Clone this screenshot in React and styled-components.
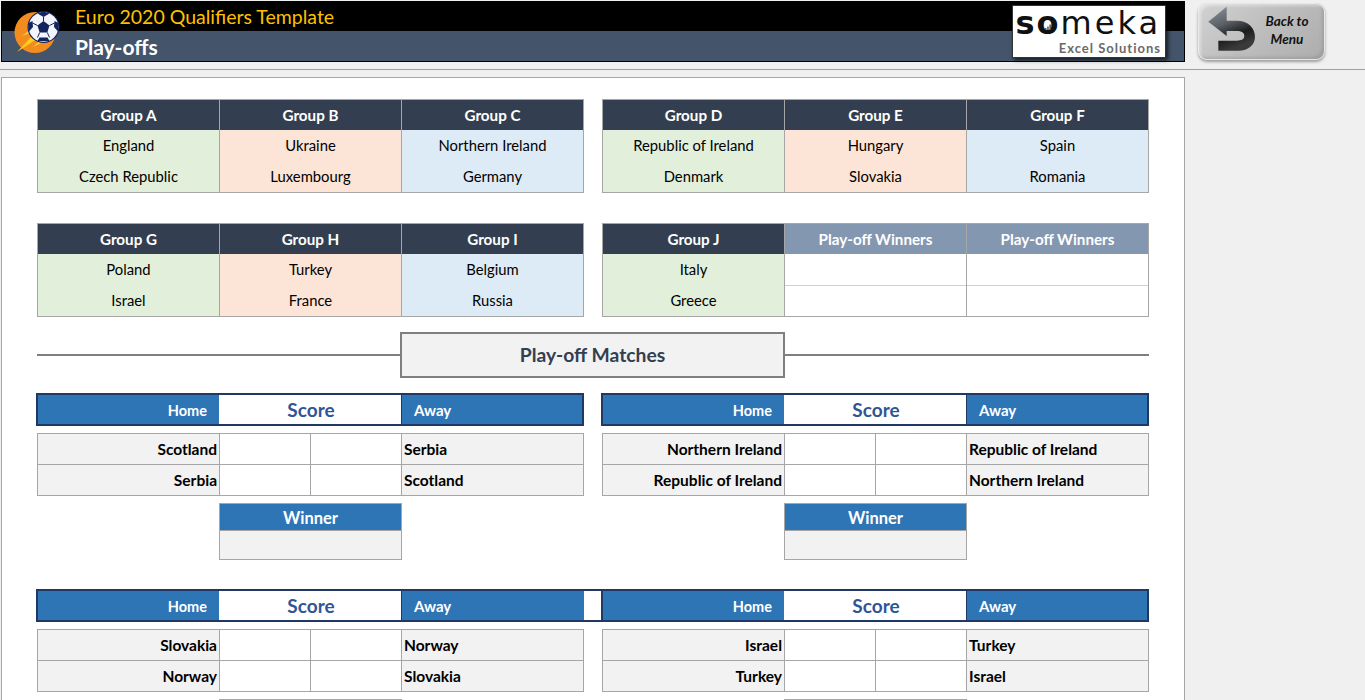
import React from 'react';
import styled, { createGlobalStyle } from 'styled-components';

const GlobalStyle = createGlobalStyle`
  * { box-sizing: border-box; }
  html, body { margin: 0; padding: 0; height: 100%; overflow: hidden; }
  body { background: #f0f0f0; font-family: Lato, "Open Sans", sans-serif; color: #000; }
`;

const Page = styled.div`
  width: 1365px;
  height: 700px;
  overflow: hidden;
  display: flex;
  flex-direction: column;
`;

const TopBar = styled.div`
  height: 70px;
  flex: none;
  display: flex;
  align-items: flex-start;
  padding: 1px 0 0 1px;
  border-bottom: 1px solid #a0a0a0;
`;

const Banner = styled.div`
  position: relative;
  width: 1184px;
  height: 61px;
  border: 1px solid #000;
  display: grid;
  grid-template-rows: 29px 30px;
  grid-template-columns: 1fr;
`;

const TitleStrip = styled.div`
  background: #000;
  color: #ffc000;
  font-size: 19.5px;
  line-height: 29px;
  padding-left: 73px;
`;

const SubtitleStrip = styled.div`
  background: #44546a;
  color: #fff;
  font-size: 21px;
  font-weight: 700;
  line-height: 32px;
  padding-left: 73px;
`;

const BallLogo = styled.svg`
  position: absolute;
  left: 12px;
  top: 8px;
`;

const SomekaLogo = styled.div`
  position: absolute;
  left: 1010px;
  top: 3px;
  width: 154px;
  height: 53px;
  background: #fff;
  border: 1px solid #333;
  box-shadow: 2px 2px 4px rgba(0, 0, 0, 0.7);
  display: flex;
  flex-direction: column;
  align-items: flex-end;
  padding-right: 4px;
  color: #111;
`;

const SomekaWord = styled.div`
  font-family: "DejaVu Sans", sans-serif;
  font-size: 32px;
  line-height: 32px;
  height: 32px;
  margin-top: 1px;
  letter-spacing: 3px;
`;

const Heavy = styled.span`
  font-weight: 700;
  letter-spacing: 2px;
`;

const SomekaMark = styled.svg`
  position: absolute;
  left: 31px;
  top: 17px;
`;

const SomekaTag = styled.div`
  margin-top: 2px;
  font-size: 13px;
  font-weight: 700;
  letter-spacing: 1px;
  line-height: 15px;
  color: #6a6a6a;
`;

const BackButton = styled.div`
  width: 127px;
  height: 57px;
  margin: 2px 0 0 13px;
  border-radius: 9px;
  display: flex;
  align-items: center;
  background: linear-gradient(135deg, #d2d2d2 0%, #bdbdbd 50%, #adadad 100%);
  box-shadow: inset 0 0 0 1px #e8e8e8, inset 3px 3px 3px rgba(255, 255, 255, 0.4), inset -3px -3px 3px rgba(120, 120, 120, 0.3), 0 2px 3px rgba(0, 0, 0, 0.35);
`;

const BackLabel = styled.div`
  flex: 1;
  padding: 0 9px 4px 0;
  text-align: center;
  font-size: 13.5px;
  line-height: 18px;
  font-weight: 700;
  font-style: italic;
  color: #111;
`;

const Sheet = styled.div`
  width: 1184px;
  margin: 7px 0 0 1px;
  flex: 1;
  min-height: 0;
  overflow: hidden;
  background: #fff;
  border: 1px solid #a6a6a6;
  border-bottom: 0;
  padding: 21px 0 0 35px;
`;

const Content = styled.div`
  width: 1112px;
  display: flex;
  flex-direction: column;
`;

const TwoColumns = styled.div`
  display: grid;
  grid-template-columns: 547px 547px;
  column-gap: 18px;
  row-gap: ${props => props.$rowGap || 0}px;
`;

const GroupTable = styled.div`
  display: grid;
  grid-template-columns: 182px 182px 182px;
  height: 94px;
  border-top: 1px solid #a6a6a6;
  border-bottom: 1px solid #a6a6a6;
  border-right: 1px solid #a6a6a6;
`;

const GroupColumn = styled.div`
  display: grid;
  grid-template-rows: 30px 31px 31px;
  border-left: 1px solid #a6a6a6;
  background: ${props => props.$tint || '#fff'};
`;

const GroupHead = styled.div`
  background: ${props => (props.$muted ? '#8497b0' : '#333f50')};
  color: #fff;
  font-size: 15.2px;
  font-weight: 700;
  padding-bottom: 1px;
  display: flex;
  align-items: center;
  justify-content: center;
`;

const GroupCell = styled.div`
  font-size: 14.8px;
  padding-bottom: 1px;
  display: flex;
  align-items: center;
  justify-content: center;
  border-top: ${props => (props.$ruled ? '1px solid #d0d0d0' : '0')};
`;

const SectionRow = styled.div`
  display: grid;
  grid-template-columns: 363px 385px 1fr;
  align-items: center;
  margin: 15px 0;
`;

const SectionLine = styled.div`
  height: 2px;
  background: #7f7f7f;
`;

const SectionTitle = styled.div`
  height: 46px;
  background: #f2f2f2;
  border: 2px solid #7f7f7f;
  color: #333f50;
  font-size: 19.3px;
  font-weight: 700;
  padding-bottom: 1px;
  display: flex;
  align-items: center;
  justify-content: center;
`;

const MatchBlock = styled.div`
  display: flex;
  flex-direction: column;
`;

const MatchHeader = styled.div`
  height: 33px;
  margin: 0 ${props => (props.$joined ? '-17px' : '0')} 0 -1px;
  display: grid;
  grid-template-columns: ${props => (props.$joined ? '181px 183px 182px 1fr' : '181px 183px 1fr')};
  background: #2e75b6;
  border: 2px solid #1f3864;
  border-right: ${props => (props.$joined ? '0' : '2px solid #1f3864')};
  color: #fff;
  font-weight: 700;
`;

const HomeLabel = styled.div`
  display: flex;
  align-items: center;
  justify-content: flex-end;
  padding: 1px 12px 0 0;
  font-size: 14.5px;
`;

const ScoreLabel = styled.div`
  display: flex;
  align-items: center;
  justify-content: center;
  padding-left: 2px;
  background: #fff;
  color: #2f5597;
  font-size: 19px;
  font-weight: 700;
  border-right: 1px solid #1f3864;
`;

const AwayLabel = styled.div`
  display: flex;
  align-items: center;
  padding: 1px 0 0 12px;
  font-size: 15px;
`;

const HeaderGap = styled.div`
  background: #fff;
`;

const ScoreTable = styled.div`
  margin-top: 7px;
  display: grid;
  grid-template-columns: 182px 91px 91px 182px;
  grid-template-rows: 30px 31px;
  height: 63px;
  border-top: 1px solid #a6a6a6;
  border-right: 1px solid #a6a6a6;
  border-bottom: 1px solid #a6a6a6;
`;

const TeamCell = styled.div`
  background: #f2f2f2;
  font-size: 15.5px;
  font-weight: 700;
  display: flex;
  align-items: center;
  justify-content: ${props => (props.$home ? 'flex-end' : 'flex-start')};
  padding: 0 2px;
  border-left: 1px solid #a6a6a6;
  border-top: ${props => (props.$second ? '1px solid #a6a6a6' : '0')};
`;

const GoalCell = styled.div`
  background: #fff;
  border-left: 1px solid #a6a6a6;
  border-top: ${props => (props.$second ? '1px solid #a6a6a6' : '0')};
`;

const WinnerBox = styled.div`
  width: 183px;
  height: 57px;
  margin: 7px 0 29px 182px;
  border: 1px solid #a6a6a6;
  display: grid;
  grid-template-rows: 27px 1fr;
`;

const WinnerHead = styled.div`
  background: #2e75b6;
  color: #fff;
  font-size: 16.5px;
  font-weight: 700;
  padding-top: 1px;
  display: flex;
  align-items: center;
  justify-content: center;
  border-bottom: 1px solid #a6a6a6;
`;

const WinnerValue = styled.div`
  background: #f2f2f2;
`;

const GREEN = '#e2efda';
const ORANGE = '#fce4d6';
const BLUE = '#ddebf7';

const topGroups = [
  [
    { title: 'Group A', tint: GREEN, teams: ['England', 'Czech Republic'] },
    { title: 'Group B', tint: ORANGE, teams: ['Ukraine', 'Luxembourg'] },
    { title: 'Group C', tint: BLUE, teams: ['Northern Ireland', 'Germany'] },
  ],
  [
    { title: 'Group D', tint: GREEN, teams: ['Republic of Ireland', 'Denmark'] },
    { title: 'Group E', tint: ORANGE, teams: ['Hungary', 'Slovakia'] },
    { title: 'Group F', tint: BLUE, teams: ['Spain', 'Romania'] },
  ],
  [
    { title: 'Group G', tint: GREEN, teams: ['Poland', 'Israel'] },
    { title: 'Group H', tint: ORANGE, teams: ['Turkey', 'France'] },
    { title: 'Group I', tint: BLUE, teams: ['Belgium', 'Russia'] },
  ],
  [
    { title: 'Group J', tint: GREEN, teams: ['Italy', 'Greece'] },
    { title: 'Play-off Winners', muted: true, teams: ['', ''] },
    { title: 'Play-off Winners', muted: true, teams: ['', ''] },
  ],
];

const matches = [
  { home: 'Scotland', away: 'Serbia', winner: 'Winner' },
  { home: 'Northern Ireland', away: 'Republic of Ireland', winner: 'Winner' },
  // only the top edge of the lower winner boxes fits on screen
  { home: 'Slovakia', away: 'Norway', joined: true },
  { home: 'Israel', away: 'Turkey' },
];

function SoccerLogo() {
  return (
    <BallLogo width="50" height="50" viewBox="0 0 50 50">
      <circle cx="21" cy="22.5" r="20.5" fill="#f28c1e" />
      <path d="M3 42 L19 25 L23 29 Z" fill="#ffc91f" />
      <path d="M8 26 L17 19 L19 22 Z M13 33 L24 23 L26 26 Z M19 37 L29 28 L31 31 Z" fill="#ffd23a" />
      <circle cx="29.5" cy="17" r="16" fill="#14245c" />
      <circle cx="29.5" cy="17" r="14.8" fill="#f2f5fb" />
      <path d="M29.5 11 L35.5 15.5 L33.3 22.5 L25.7 22.5 L23.5 15.5 Z" fill="#14245c" />
      <path d="M29.5 1.5 L35.5 3.5 L29.5 7 L23.5 3.5 Z M44.5 13 L44.5 22 L40 17 L40.5 11 Z M14.5 13 L14.5 22 L19 17 L18.5 11 Z M23.5 31 L35.5 31 L33.5 27.5 L25.5 27.5 Z" fill="#14245c" />
      <path d="M29.5 7 V11 M35.5 15.5 L40.5 13 M23.5 15.5 L18.5 13 M33.3 22.5 L35.5 27.5 M25.7 22.5 L23.5 27.5" stroke="#14245c" strokeWidth="1" />
    </BallLogo>
  );
}

function BackArrow() {
  return (
    <svg width="60" height="57" viewBox="0 0 60 57">
      <defs>
        <linearGradient id="backArrowFill" x1="0" y1="0" x2="0.4" y2="1">
          <stop offset="0" stopColor="#8e959c" />
          <stop offset="0.45" stopColor="#5a6066" />
          <stop offset="0.75" stopColor="#1c1c1c" />
          <stop offset="1" stopColor="#3a3a3a" />
        </linearGradient>
      </defs>
      <path
        transform="translate(-8 -3) scale(0.3333)"
        fill="url(#backArrowFill)"
        d="M55 65 L110 20 L110 62 L140 62 C175 62 195 85 195 110 C195 135 175 152 145 152 L85 152 L85 122 L140 122 C155 122 163 117 163 108 C163 98 155 93 140 93 L110 93 L110 108 Z"
      />
    </svg>
  );
}

function GroupBlock({ columns }) {
  return (
    <GroupTable>
      {columns.map((col, i) => (
        <GroupColumn key={i} $tint={col.tint}>
          <GroupHead $muted={col.muted}>{col.title}</GroupHead>
          <GroupCell>{col.teams[0]}</GroupCell>
          <GroupCell $ruled={col.muted}>{col.teams[1]}</GroupCell>
        </GroupColumn>
      ))}
    </GroupTable>
  );
}

function Match({ home, away, joined, winner }) {
  return (
    <MatchBlock>
      <MatchHeader $joined={joined}>
        <HomeLabel>Home</HomeLabel>
        <ScoreLabel>Score</ScoreLabel>
        <AwayLabel>Away</AwayLabel>
        {joined && <HeaderGap />}
      </MatchHeader>
      <ScoreTable>
        <TeamCell $home>{home}</TeamCell>
        <GoalCell />
        <GoalCell />
        <TeamCell>{away}</TeamCell>
        <TeamCell $home $second>{away}</TeamCell>
        <GoalCell $second />
        <GoalCell $second />
        <TeamCell $second>{home}</TeamCell>
      </ScoreTable>
      <WinnerBox>
        <WinnerHead>{winner}</WinnerHead>
        <WinnerValue />
      </WinnerBox>
    </MatchBlock>
  );
}

export default function App() {
  return (
    <>
      <GlobalStyle />
      <Page>
        <TopBar>
          <Banner>
            <TitleStrip>Euro 2020 Qualifiers Template</TitleStrip>
            <SubtitleStrip>Play-offs</SubtitleStrip>
            <SoccerLogo />
            <SomekaLogo>
              <SomekaWord><Heavy>so</Heavy>meka</SomekaWord>
              <SomekaMark width="8" height="8" viewBox="0 0 8 8">
                <path d="M1 7 V5 H2.5 V7 Z M3.2 7 V3.5 H4.7 V7 Z M5.4 7 V1.5 H6.9 V7 Z" fill="#555" />
              </SomekaMark>
              <SomekaTag>Excel Solutions</SomekaTag>
            </SomekaLogo>
          </Banner>
          <BackButton>
            <BackArrow />
            <BackLabel>Back to<br />Menu</BackLabel>
          </BackButton>
        </TopBar>
        <Sheet>
          <Content>
            <TwoColumns $rowGap={30}>
              {topGroups.map((columns, i) => (
                <GroupBlock key={i} columns={columns} />
              ))}
            </TwoColumns>
            <SectionRow>
              <SectionLine />
              <SectionTitle>Play-off Matches</SectionTitle>
              <SectionLine />
            </SectionRow>
            <TwoColumns>
              {matches.map((match, i) => (
                <Match key={i} {...match} />
              ))}
            </TwoColumns>
          </Content>
        </Sheet>
      </Page>
    </>
  );
}
